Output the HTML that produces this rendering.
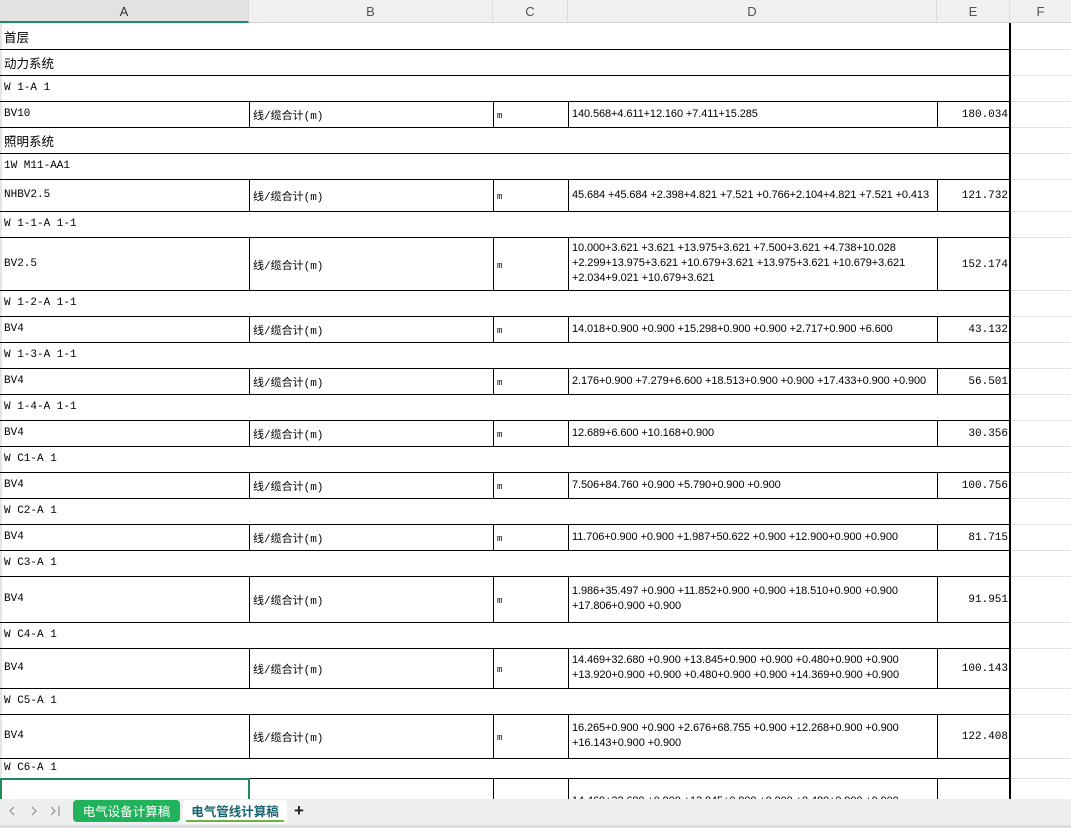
<!DOCTYPE html>
<html style="overflow:hidden;width:1071px;height:828px"><head><meta charset="utf-8"><style>
*{margin:0;padding:0;box-sizing:border-box}
body{width:1071px;height:828px;overflow:hidden;background:#fff;position:relative;font-family:"Liberation Mono","Noto Sans CJK SC",monospace;color:#000}
.hdr{position:absolute;top:0;height:23px;background:#f0f0f0;border-right:1px solid #dcdcdc;border-bottom:1px solid #d6d6d6;font-family:"Liberation Sans",sans-serif;font-size:13px;color:#555;text-align:center;line-height:23px}
.r{position:absolute;left:0;width:1010px;border-bottom:1px solid #000}
.t{position:absolute;left:4px;top:0;bottom:0;display:flex;align-items:center;font-size:11px;white-space:nowrap}
.cn{font-family:"Noto Sans CJK SC","WenQuanYi Zen Hei",sans-serif;font-size:12.5px}
.c{position:absolute;top:0;bottom:0;display:flex;align-items:center;font-size:11px;padding-left:3px;white-space:nowrap}
.b{left:249px;width:244px;border-left:1px solid #000;padding-top:2px}
.cc{left:493px;width:75px;border-left:1px solid #000;font-size:9px;padding-top:4px}
.d{left:568px;width:369px;border-left:1px solid #000;font-family:"Liberation Sans",sans-serif;font-size:11px;line-height:15px;white-space:normal;letter-spacing:-0.1px}
.e{left:937px;width:73px;border-left:1px solid #000;justify-content:flex-end;padding-right:2px;padding-top:2px}
.fl{position:absolute;left:1011px;width:60px;height:1px;background:#e2e2e2}
</style></head><body>
<div class="hdr" style="left:0;width:249px;background:#e2e2e2;color:#333;border-bottom:2px solid #1e8a5e">A</div>
<div class="hdr" style="left:249px;width:244px">B</div>
<div class="hdr" style="left:493px;width:75px">C</div>
<div class="hdr" style="left:568px;width:369px">D</div>
<div class="hdr" style="left:937px;width:73px">E</div>
<div class="hdr" style="left:1010px;width:61px;border-right:none">F</div>
<div style="position:absolute;left:0;top:23px;width:2px;height:776px;background:#e4e4e4"></div>

<div class="r" style="top:23px;height:27px"><div class="t cn">首层</div></div>
<div class="r" style="top:49px;height:27px"><div class="t cn">动力系统</div></div>
<div class="r" style="top:75px;height:27px"><div class="t">W 1-A 1</div></div>
<div class="r" style="top:101px;height:27px"><div class="t">BV10</div><div class="c b">线/缆合计(m)</div><div class="c cc">m</div><div class="c d">140.568+4.611+12.160 +7.411+15.285</div><div class="c e">180.034</div></div>
<div class="r" style="top:127px;height:27px"><div class="t cn">照明系统</div></div>
<div class="r" style="top:153px;height:27px"><div class="t">1W M11-AA1</div></div>
<div class="r" style="top:179px;height:33px"><div class="t">NHBV2.5</div><div class="c b">线/缆合计(m)</div><div class="c cc">m</div><div class="c d">45.684 +45.684 +2.398+4.821 +7.521 +0.766+2.104+4.821 +7.521 +0.413</div><div class="c e">121.732</div></div>
<div class="r" style="top:211px;height:27px"><div class="t">W 1-1-A 1-1</div></div>
<div class="r" style="top:237px;height:54px"><div class="t">BV2.5</div><div class="c b">线/缆合计(m)</div><div class="c cc">m</div><div class="c d">10.000+3.621 +3.621 +13.975+3.621 +7.500+3.621 +4.738+10.028 +2.299+13.975+3.621 +10.679+3.621 +13.975+3.621 +10.679+3.621 +2.034+9.021 +10.679+3.621</div><div class="c e">152.174</div></div>
<div class="r" style="top:290px;height:27px"><div class="t">W 1-2-A 1-1</div></div>
<div class="r" style="top:316px;height:27px"><div class="t">BV4</div><div class="c b">线/缆合计(m)</div><div class="c cc">m</div><div class="c d">14.018+0.900 +0.900 +15.298+0.900 +0.900 +2.717+0.900 +6.600</div><div class="c e">43.132</div></div>
<div class="r" style="top:342px;height:27px"><div class="t">W 1-3-A 1-1</div></div>
<div class="r" style="top:368px;height:27px"><div class="t">BV4</div><div class="c b">线/缆合计(m)</div><div class="c cc">m</div><div class="c d">2.176+0.900 +7.279+6.600 +18.513+0.900 +0.900 +17.433+0.900 +0.900</div><div class="c e">56.501</div></div>
<div class="r" style="top:394px;height:27px"><div class="t">W 1-4-A 1-1</div></div>
<div class="r" style="top:420px;height:27px"><div class="t">BV4</div><div class="c b">线/缆合计(m)</div><div class="c cc">m</div><div class="c d">12.689+6.600 +10.168+0.900</div><div class="c e">30.356</div></div>
<div class="r" style="top:446px;height:27px"><div class="t">W C1-A 1</div></div>
<div class="r" style="top:472px;height:27px"><div class="t">BV4</div><div class="c b">线/缆合计(m)</div><div class="c cc">m</div><div class="c d">7.506+84.760 +0.900 +5.790+0.900 +0.900</div><div class="c e">100.756</div></div>
<div class="r" style="top:498px;height:27px"><div class="t">W C2-A 1</div></div>
<div class="r" style="top:524px;height:27px"><div class="t">BV4</div><div class="c b">线/缆合计(m)</div><div class="c cc">m</div><div class="c d">11.706+0.900 +0.900 +1.987+50.622 +0.900 +12.900+0.900 +0.900</div><div class="c e">81.715</div></div>
<div class="r" style="top:550px;height:27px"><div class="t">W C3-A 1</div></div>
<div class="r" style="top:576px;height:47px"><div class="t">BV4</div><div class="c b">线/缆合计(m)</div><div class="c cc">m</div><div class="c d">1.986+35.497 +0.900 +11.852+0.900 +0.900 +18.510+0.900 +0.900 +17.806+0.900 +0.900</div><div class="c e">91.951</div></div>
<div class="r" style="top:622px;height:27px"><div class="t">W C4-A 1</div></div>
<div class="r" style="top:648px;height:41px"><div class="t">BV4</div><div class="c b">线/缆合计(m)</div><div class="c cc">m</div><div class="c d">14.469+32.680 +0.900 +13.845+0.900 +0.900 +0.480+0.900 +0.900 +13.920+0.900 +0.900 +0.480+0.900 +0.900 +14.369+0.900 +0.900</div><div class="c e">100.143</div></div>
<div class="r" style="top:688px;height:27px"><div class="t">W C5-A 1</div></div>
<div class="r" style="top:714px;height:45px"><div class="t">BV4</div><div class="c b">线/缆合计(m)</div><div class="c cc">m</div><div class="c d">16.265+0.900 +0.900 +2.676+68.755 +0.900 +12.268+0.900 +0.900 +16.143+0.900 +0.900</div><div class="c e">122.408</div></div>
<div class="r" style="top:758px;height:21px"><div class="t">W C6-A 1</div></div>
<div class="r" style="top:778px;height:21px;border-bottom:none"><div class="c b"></div><div class="c cc"></div><div class="c d" style="align-items:flex-start;padding-top:16px">14.469+32.680 +0.900 +13.845+0.900 +0.900 +0.480+0.900 +0.900</div><div class="c e"></div></div>
<div style="position:absolute;left:0;top:778px;width:250px;height:30px;border:2px solid #1e8a5e"></div>

<div style="position:absolute;left:1009px;top:23px;width:2px;height:776px;background:#000"></div>
<div class="fl" style="top:49px"></div><div class="fl" style="top:75px"></div><div class="fl" style="top:101px"></div><div class="fl" style="top:127px"></div><div class="fl" style="top:153px"></div><div class="fl" style="top:179px"></div><div class="fl" style="top:211px"></div><div class="fl" style="top:237px"></div><div class="fl" style="top:290px"></div><div class="fl" style="top:316px"></div><div class="fl" style="top:342px"></div><div class="fl" style="top:368px"></div><div class="fl" style="top:394px"></div><div class="fl" style="top:420px"></div><div class="fl" style="top:446px"></div><div class="fl" style="top:472px"></div><div class="fl" style="top:498px"></div><div class="fl" style="top:524px"></div><div class="fl" style="top:550px"></div><div class="fl" style="top:576px"></div><div class="fl" style="top:622px"></div><div class="fl" style="top:648px"></div><div class="fl" style="top:688px"></div><div class="fl" style="top:714px"></div><div class="fl" style="top:758px"></div><div class="fl" style="top:778px"></div>

<div style="position:absolute;left:0;top:799px;width:1071px;height:29px;background:#eeeff0;border-bottom:3px solid #dcdddf"></div>
<svg style="position:absolute;left:0;top:799px" width="70" height="24" viewBox="0 0 70 24" fill="none" stroke="#999" stroke-width="1.3">
<path d="M14 8 L10 12 L14 16"/><path d="M32 8 L36 12 L32 16"/><path d="M51 8 L55 12 L51 16"/><path d="M59 7 V17"/>
</svg>
<div style="position:absolute;left:73px;top:800px;width:107px;height:22px;background:#21b25c;border-radius:4px;color:#fff;font-family:'Noto Sans CJK SC',sans-serif;font-size:12.5px;text-align:center;line-height:22px">电气设备计算稿</div>
<div style="position:absolute;left:183px;top:800px;width:104px;height:24px;background:#fff;border-radius:4px 4px 0 0;color:#1a6470;font-family:'Noto Sans CJK SC',sans-serif;font-size:12.5px;font-weight:bold;text-align:center;line-height:22px">电气管线计算稿<div style="position:absolute;left:3px;right:3px;bottom:2px;height:2px;background:#6cb33f"></div></div>
<div style="position:absolute;left:294px;top:801px;font-family:'Liberation Sans',sans-serif;font-size:17px;font-weight:bold;color:#222">+</div>
</body></html>
